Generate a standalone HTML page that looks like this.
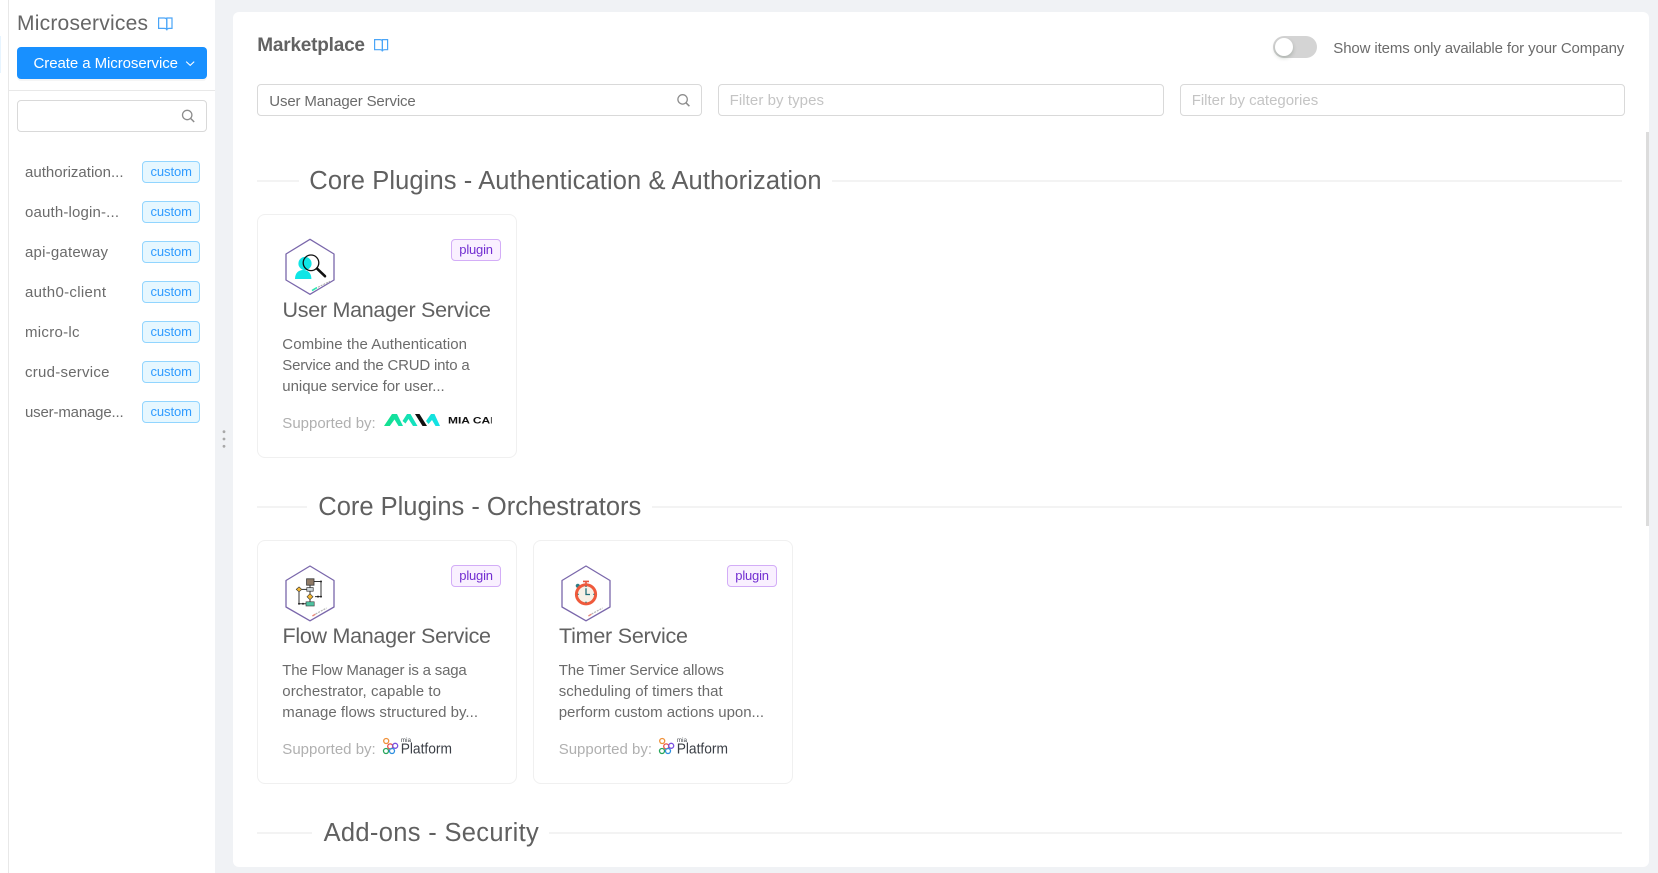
<!DOCTYPE html>
<html lang="en">
<head>
<meta charset="utf-8">
<title>Marketplace</title>
<style>
html,body{margin:0;padding:0;width:1658px;height:873px;overflow:hidden;background:#f0f2f5;font-family:"Liberation Sans",sans-serif}
.b{position:absolute;box-sizing:border-box}
.inp{border:1px solid #d9d9d9;border-radius:4px;background:#fff;height:32px}
.tag{left:142px;width:58px;height:22px;background:#e6f7ff;border:1px solid #91d5ff;border-radius:4px}
.pl{width:50px;height:22px;background:#f9f0ff;border:1px solid #d3adf7;border-radius:4px}
.card{width:260px;height:244px;background:#fff;border:1px solid #f0f0f0;border-radius:8px}
.ln{height:2px;background:#f3f3f3}
svg{position:absolute;left:0;top:0}
text{font-family:"Liberation Sans",sans-serif;fill:#595959;white-space:pre}
.li{font-size:15px;fill:#6b6b6b}
.cu{font-size:13px;fill:#2f9bff}
.se{font-size:25.5px;fill:#606060}
.ct{font-size:21.5px;fill:#616161}
.de{font-size:15px;fill:#6b6b6b}
.su{font-size:15px;fill:#b0b0b0}
.pg{font-size:13px;fill:#722ed1}
.ph{font-size:15px;fill:#c4c4c4}
</style>
</head>
<body>
<div class="b" style="left:0;top:0;width:215px;height:873px;background:#fff"></div>
<div class="b" style="left:0;top:36px;width:1px;height:37px;background:#e6f4ff"></div>
<div class="b" style="left:8px;top:0;width:1px;height:873px;background:#e8e8e8"></div>
<div class="b" style="left:17px;top:47px;width:190px;height:32px;background:#1890ff;border-radius:4px;box-shadow:0 2px 0 rgba(0,0,0,.04)"></div>
<div class="b" style="left:9px;top:90px;width:206px;height:1px;background:#e8e8e8"></div>
<div class="b inp" style="left:17px;top:100px;width:190px"></div>
<div class="b tag" style="top:161px"></div>
<div class="b tag" style="top:201px"></div>
<div class="b tag" style="top:241px"></div>
<div class="b tag" style="top:281px"></div>
<div class="b tag" style="top:321px"></div>
<div class="b tag" style="top:361px"></div>
<div class="b tag" style="top:401px"></div>

<div class="b" style="left:233px;top:12px;width:1416px;height:855px;background:#fff;border-radius:6px"></div>
<div class="b" style="left:1646px;top:132px;width:3px;height:394px;background:#dcdcdc"></div>
<div class="b inp" style="left:257px;top:84px;width:445px"></div>
<div class="b inp" style="left:718px;top:84px;width:446px"></div>
<div class="b inp" style="left:1180px;top:84px;width:445px"></div>
<div class="b" style="left:1273px;top:36px;width:44px;height:22px;border-radius:11px;background:#d4d4d4"></div>
<div class="b" style="left:1275px;top:38px;width:18px;height:18px;border-radius:50%;background:#fff;box-shadow:0 2px 4px rgba(0,35,11,.2)"></div>

<div class="b ln" style="left:257px;top:180px;width:42px"></div>
<div class="b ln" style="left:832px;top:180px;width:790px"></div>
<div class="b ln" style="left:257px;top:506px;width:50px"></div>
<div class="b ln" style="left:652px;top:506px;width:970px"></div>
<div class="b ln" style="left:257px;top:832px;width:55px"></div>
<div class="b ln" style="left:549px;top:832px;width:1073px"></div>

<div class="b card" style="left:257px;top:214px"></div>
<div class="b card" style="left:257px;top:540px"></div>
<div class="b card" style="left:533px;top:540px"></div>
<div class="b pl" style="left:451px;top:239px"></div>
<div class="b pl" style="left:451px;top:565px"></div>
<div class="b pl" style="left:727px;top:565px"></div>

<svg width="1658" height="873" viewBox="0 0 1658 873" xmlns="http://www.w3.org/2000/svg">
<defs>
<clipPath id="mc"><rect x="445" y="410" width="46.7" height="20"/></clipPath>
<linearGradient id="mg" x1="384" x2="440" y1="0" y2="0" gradientUnits="userSpaceOnUse"><stop offset="0" stop-color="#14e08c"/><stop offset="1" stop-color="#14e2ea"/></linearGradient>
</defs>

<!-- sidebar -->
<text x="17" y="30" font-size="21" textLength="131" style="fill:#666">Microservices</text>
<g fill="none" stroke="#4aa5f7" stroke-width="1.2">
<path d="M158.6 18h5.4c1.7 0 2.8.8 2.8 2.2v10c0-1-1-1.8-2.6-1.8h-5.6z"/>
<path d="M172 18h-5.2v12.2c0-1 1-1.8 2.6-1.8H172z"/>
</g>
<text x="33.5" y="68" font-size="15" textLength="144.5" style="fill:#fff">Create a Microservice</text>
<path d="M186.2 61.6l4 3.8 4-3.8" fill="none" stroke="#fff" stroke-width="1.1"/>
<circle cx="187.2" cy="115" r="4.7" fill="none" stroke="#8c8c8c" stroke-width="1.3"/>
<path d="M190.6 118.4l3.6 3.6" stroke="#8c8c8c" stroke-width="1.5" fill="none"/>

<text class="li" x="25" y="177" textLength="98.5">authorization...</text>
<text class="li" x="25" y="217" textLength="94">oauth-login-...</text>
<text class="li" x="25" y="257" textLength="83">api-gateway</text>
<text class="li" x="25" y="297" textLength="81">auth0-client</text>
<text class="li" x="25" y="337" textLength="54.5">micro-lc</text>
<text class="li" x="25" y="377" textLength="84.5">crud-service</text>
<text class="li" x="25" y="417" textLength="98.7">user-manage...</text>
<text class="cu" x="150.5" y="176" textLength="41.5">custom</text>
<text class="cu" x="150.5" y="216" textLength="41.5">custom</text>
<text class="cu" x="150.5" y="256" textLength="41.5">custom</text>
<text class="cu" x="150.5" y="296" textLength="41.5">custom</text>
<text class="cu" x="150.5" y="336" textLength="41.5">custom</text>
<text class="cu" x="150.5" y="376" textLength="41.5">custom</text>
<text class="cu" x="150.5" y="416" textLength="41.5">custom</text>
<circle cx="224" cy="431.7" r="1.4" fill="#a8a8a8"/><circle cx="224" cy="439" r="1.4" fill="#a8a8a8"/><circle cx="224" cy="446.3" r="1.4" fill="#a8a8a8"/>

<!-- header -->
<text x="257.3" y="51" font-size="19" font-weight="bold" textLength="107.7" style="fill:#626262">Marketplace</text>
<g fill="none" stroke="#4aa5f7" stroke-width="1.2">
<path d="M374.6 39.6h5.2c1.6 0 2.6.8 2.6 2.2v9.6c0-1-1-1.7-2.4-1.7h-5.4z"/>
<path d="M387.6 39.6h-5.2v11.8c0-1 1-1.7 2.4-1.7h2.8z"/>
</g>
<text x="1333.3" y="53" font-size="15" textLength="291" style="fill:#6b6b6b">Show items only available for your Company</text>
<text x="269.3" y="106" font-size="15" textLength="146.4" style="fill:#6b6b6b">User Manager Service</text>
<circle cx="682.6" cy="99.4" r="4.7" fill="none" stroke="#8c8c8c" stroke-width="1.3"/>
<path d="M686 102.8l3.4 3.4" stroke="#8c8c8c" stroke-width="1.5" fill="none"/>
<text class="ph" x="729.6" y="105" textLength="94.4">Filter by types</text>
<text class="ph" x="1191.7" y="105" textLength="126.5">Filter by categories</text>

<!-- sections -->
<text class="se" x="309.3" y="189" textLength="512.3">Core Plugins - Authentication &amp; Authorization</text>
<text class="se" x="318.3" y="515" textLength="323">Core Plugins - Orchestrators</text>
<text class="se" x="323.6" y="841" textLength="215.2">Add-ons - Security</text>

<!-- card 1 -->
<path d="M310 239.3L334 254V280L310 294.3L286 280V254Z" fill="#fff" stroke="#7a67ab" stroke-width="1.3" stroke-linejoin="round"/>
<circle cx="305" cy="263.5" r="6.6" fill="#0fe6e6"/>
<path d="M295 279c0-6 3.5-9 8.2-9s8.2 3 8.2 9z" fill="#0fe6e6"/>
<circle cx="311" cy="262.8" r="7.8" fill="none" stroke="#111" stroke-width="1.3"/>
<path d="M317 268.6L325 276.2" stroke="#111" stroke-width="2.6" fill="none" stroke-linecap="round"/>
<path d="M312 290.6l5-3" stroke="#2ee6b0" stroke-width="1.6" fill="none"/>
<path d="M318 287.2l12-6" stroke="#aaa" stroke-width="1" fill="none" stroke-dasharray="2 1"/>
<text x="459.3" y="254" class="pg" textLength="33.7">plugin</text>
<text class="ct" x="282.5" y="317" textLength="208.5">User Manager Service</text>
<text class="de" x="282.3" y="349" textLength="184.7">Combine the Authentication</text>
<text class="de" x="282.3" y="370" textLength="187.4">Service and the CRUD into a</text>
<text class="de" x="282.3" y="391" textLength="162.4">unique service for user...</text>
<text class="su" x="282.3" y="428" textLength="93.4">Supported by:</text>
<path d="M384 426L392 414H397L403 426H398.5L394.5 419.5L389.8 426Z" fill="url(#mg)"/>
<path d="M402.5 421L407 414H410.5L417.5 426H413L408.5 419L405.5 423.5Z" fill="url(#mg)"/>
<path d="M415 414H419.5L427 426H422.5Z" fill="#111"/>
<path d="M426 421L431 414H434.5L440 426H435.5L432 420L428.5 424Z" fill="url(#mg)"/>
<g clip-path="url(#mc)"><text x="448" y="423.4" font-size="8.8" font-weight="bold" textLength="45.5" lengthAdjust="spacingAndGlyphs" style="fill:#111">MIA CAI</text></g>

<!-- card 2 -->
<path d="M310 566L334 580.5V607L310 620.8L286 607V580.5Z" fill="#fff" stroke="#7a67ab" stroke-width="1.3" stroke-linejoin="round"/>
<g fill="none" stroke="#333" stroke-width="1">
<path d="M310 585V601.5"/>
<path d="M314 581.5H321V596.6H315"/>
<path d="M299 592V603.8H306"/>
<path d="M302 589.4H306.5"/>
</g>
<rect x="306.6" y="578.8" width="7.4" height="6.4" fill="#8f7a66" stroke="#333" stroke-width=".8"/>
<rect x="306.8" y="587.6" width="6.4" height="3.6" fill="#cfd8dc" stroke="#333" stroke-width=".7"/>
<path d="M299 586.9l2.8 2.5-2.8 2.5-2.8-2.5z" fill="#f2b632" stroke="#333" stroke-width=".6"/>
<path d="M310 593.7l3 3-3 3-3-3z" fill="#f2b632" stroke="#333" stroke-width=".6"/>
<rect x="306" y="601.8" width="8.2" height="4.2" fill="#4fc3a1" stroke="#333" stroke-width=".6"/>
<circle cx="321" cy="581.5" r="1" fill="#222"/><circle cx="318" cy="596.6" r="1" fill="#222"/><circle cx="321" cy="596.6" r="1" fill="#222"/><circle cx="299" cy="603.8" r="1" fill="#222"/><circle cx="303" cy="603.8" r="1" fill="#222"/>
<path d="M312.4 616l3-1.8" stroke="#e98a7a" stroke-width="1.4" fill="none"/>
<path d="M315.6 614l11-6" stroke="#b4b4b4" stroke-width="1.2" fill="none" stroke-dasharray="2 1"/>
<text x="459.3" y="580" class="pg" textLength="33.7">plugin</text>
<text class="ct" x="282.5" y="643" textLength="208.5">Flow Manager Service</text>
<text class="de" x="282.3" y="675" textLength="184.4">The Flow Manager is a saga</text>
<text class="de" x="282.3" y="696" textLength="158.7">orchestrator, capable to</text>
<text class="de" x="282.3" y="717" textLength="195.7">manage flows structured by...</text>
<text class="su" x="282.3" y="754" textLength="93.4">Supported by:</text>
<g fill="none" stroke-width="1.3">
<circle cx="386.2" cy="741" r="2.5" stroke="#f0913a"/>
<circle cx="390.2" cy="746.4" r="2.5" stroke="#e8504a"/>
<circle cx="395.2" cy="745.8" r="2.5" stroke="#7a4fe0"/>
<circle cx="386" cy="751" r="2.5" stroke="#26a65b"/>
<circle cx="392" cy="751" r="2.5" stroke="#2e8fe0"/>
</g>
<text x="401" y="742" font-size="6" textLength="10" style="fill:#3a3e45">mia</text>
<text x="400.7" y="753.4" font-size="15" textLength="51.3" lengthAdjust="spacingAndGlyphs" style="fill:#3a3e45">Platform</text>

<!-- card 3 -->
<path d="M586 566L610 580.5V607L586 620.8L562 607V580.5Z" fill="#fff" stroke="#7a67ab" stroke-width="1.3" stroke-linejoin="round"/>
<path d="M583 581.4h6M586 581.4v2.6" stroke="#e8553d" stroke-width="1.6" fill="none"/>
<circle cx="577.8" cy="585.8" r="2.1" fill="#2e7d86"/>
<circle cx="586" cy="594.3" r="9.6" fill="#f6f1e7" stroke="#ef5a3c" stroke-width="3"/>
<path d="M586 588.2V594.5H590" fill="none" stroke="#1f6f7a" stroke-width="1.3"/>
<path d="M586 585.8v1.2M586 601.6v1.2M577.6 594.3h1.2M593.2 594.3h1.2" stroke="#1f6f7a" stroke-width="1.2" fill="none"/>
<path d="M588.4 616l3-1.8" stroke="#e98a7a" stroke-width="1.4" fill="none"/>
<path d="M591.6 614l11-6" stroke="#b4b4b4" stroke-width="1.2" fill="none" stroke-dasharray="2 1"/>
<text x="735.3" y="580" class="pg" textLength="33.7">plugin</text>
<text class="ct" x="559" y="643" textLength="129">Timer Service</text>
<text class="de" x="558.7" y="675" textLength="165.3">The Timer Service allows</text>
<text class="de" x="558.7" y="696" textLength="164">scheduling of timers that</text>
<text class="de" x="558.7" y="717" textLength="205.3">perform custom actions upon...</text>
<text class="su" x="558.7" y="754" textLength="93.3">Supported by:</text>
<g fill="none" stroke-width="1.3">
<circle cx="662.2" cy="741" r="2.5" stroke="#f0913a"/>
<circle cx="666.2" cy="746.4" r="2.5" stroke="#e8504a"/>
<circle cx="671.2" cy="745.8" r="2.5" stroke="#7a4fe0"/>
<circle cx="662" cy="751" r="2.5" stroke="#26a65b"/>
<circle cx="668" cy="751" r="2.5" stroke="#2e8fe0"/>
</g>
<text x="677" y="742" font-size="6" textLength="10" style="fill:#3a3e45">mia</text>
<text x="676.7" y="753.4" font-size="15" textLength="51.3" lengthAdjust="spacingAndGlyphs" style="fill:#3a3e45">Platform</text>
</svg>
</body>
</html>
